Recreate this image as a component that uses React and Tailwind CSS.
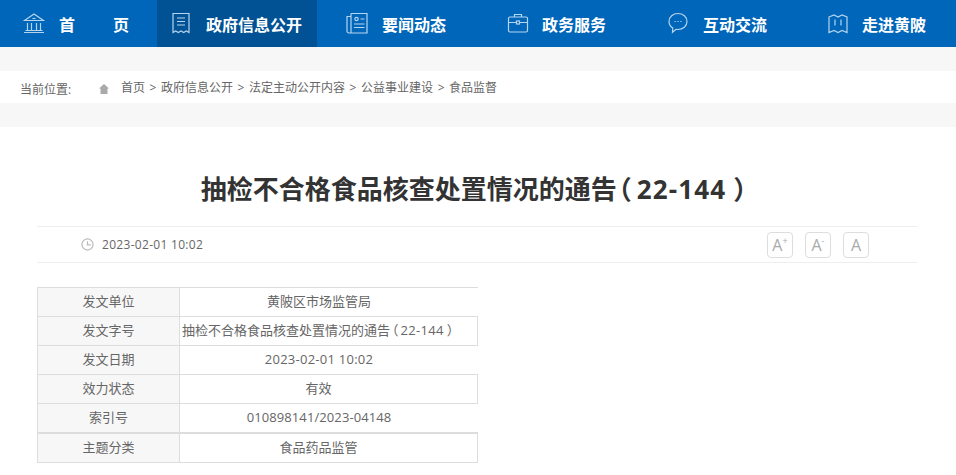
import React from 'react';

const navItems = [
  { label: '政府信息公开', icon: 'doc', active: true, width: 'w-[160px]', pad: 'pl-[13px]', gap: 'gap-[14px]' },
  { label: '要闻动态', icon: 'news', width: 'w-[160px]', pad: 'pl-[29px]', gap: 'gap-[14px]' },
  { label: '政务服务', icon: 'case', width: 'w-[160px]', pad: 'pl-[30px]', gap: 'gap-[13px]' },
  { label: '互动交流', icon: 'chat', width: 'w-[160px]', pad: 'pl-[30px]', gap: 'gap-[14px]' },
  { label: '走进黄陂', icon: 'map', width: 'w-[159px]', pad: 'pl-[30px]', gap: 'gap-[13px]' },
];

const crumbs = ['首页', '政府信息公开', '法定主动公开内容', '公益事业建设', '食品监督'];

const rows = [
  ['发文单位', '黄陂区市场监管局', ''],
  ['发文字号', null, ''],
  ['发文日期', '2023-02-01 10:02', 'tracking-[0.25px]'],
  ['效力状态', '有效', ''],
  ['索引号', '010898141/2023-04148', 'tracking-[0.1px]'],
  ['主题分类', '食品药品监管', ''],
];

const NavIcon = ({ name }) => {
  const common = {
    viewBox: '0 0 22 22',
    fill: 'none',
    stroke: 'currentColor',
    strokeWidth: 1.2,
    className: 'w-[22px] h-[22px] text-[#b5d4ee] shrink-0 -mt-[1px]',
  };
  if (name === 'home') {
    return (
      <svg {...common}>
        <path d="M1.500 8.500 11 2l9.500 6.500z" />
        <path d="M9.500 6.500h3" />
        <path d="M4.500 11v7M8.500 11v7M13.500 11v7M17.500 11v7" />
        <path d="M2.500 18.500h17M1 20.500h20" />
      </svg>
    );
  }
  if (name === 'doc') {
    return (
      <svg {...common}>
        <path d="M3 1.500h16v19l-2.700-1.500-2.600 1.500-2.700-1.500-2.700 1.500-2.600-1.500L3 20.500z" />
        <path d="M7 6h8M7 9.500h8M7 13h8" />
      </svg>
    );
  }
  if (name === 'news') {
    return (
      <svg {...common}>
        <path d="M5 1.500h16v19.500H3a2 2 0 0 1-2-2V4.500h4" />
        <path d="M5 1.500V21" />
        <circle cx="10.500" cy="7" r="1.700" />
        <path d="M14.500 7h4M8 12h10.500M8 15.500h10.500" />
      </svg>
    );
  }
  if (name === 'case') {
    return (
      <svg {...common}>
        <rect x="1.500" y="5" width="19" height="15" rx="1.500" />
        <path d="M7.500 5V2.500h7V5" />
        <path d="M1.500 10.500h7.500M13 10.500h7.500" />
        <rect x="9.500" y="9" width="3" height="3" />
      </svg>
    );
  }
  if (name === 'chat') {
    return (
      <svg {...common}>
        <path d="M11 1.500c5 0 9 3.500 9 8s-4 8-9 8c-.7 0-1.300 0-2-.2l-3.500 3 .3-4.300C3.300 14.500 2 12 2 9.500c0-4.500 4-8 9-8z" />
        <path d="M7.500 9.500h1.200M10.400 9.500h1.200M13.300 9.500h1.200" />
      </svg>
    );
  }
  return (
    <svg {...common}>
      <path d="M2 5 7 3l4 2 4-2 5 2v15.500L15 18.500l-4 2-4-2-5 2z" />
      <path d="M8 7.500v6M14 7.500v6" />
    </svg>
  );
};

const SizeButton = ({ sup }) => (
  <span className="w-[26px] h-[26px] border border-[#dddddd] rounded-[4px] flex items-center justify-center text-[16px] text-[#aaaaaa] leading-none">
    <span>A</span>
    {sup && <span className="self-start mt-[3px] text-[9px] leading-none">{sup}</span>}
  </span>
);

export default function App() {
  return (
    <div className="w-[956px] h-[475px] overflow-hidden bg-white font-['Open_Sans','Noto_Sans_CJK_SC',sans-serif]">
      <nav className="h-[47px] flex bg-[#0066ba] text-white font-bold text-[16px]">
        <div className="w-[157px] flex items-center pl-[23px]">
          <NavIcon name="home" />
          <span className="ml-[14px] mt-[3px]">首</span>
          <span className="ml-[38px] mt-[3px]">页</span>
        </div>
        {navItems.map((item) => (
          <div
            key={item.label}
            className={`${item.width} ${item.pad} ${item.gap} flex items-center ${item.active ? 'bg-[#005294]' : ''}`}
          >
            <NavIcon name={item.icon} />
            <span className="mt-[3px]">{item.label}</span>
          </div>
        ))}
      </nav>

      <div className="bg-[#f7f7f7] py-[24px]">
        <div className="h-[32px] bg-white flex items-center pl-[20px] text-[12px] text-[#666666]">
          <span className="w-[79px] pt-[5px]">当前位置:</span>
          <svg viewBox="0 0 10 10" className="w-[10px] h-[10px] text-[#aaaaaa] mt-[3px]" fill="currentColor">
            <path d="M5 0 10 4.500H8.500V10h-7V4.500H0z" />
          </svg>
          <div className="ml-[12px] flex items-center pt-[1px]">
            {crumbs.map((c, i) => (
              <React.Fragment key={c}>
                {i > 0 && <span className="w-[16px] text-center">&gt;</span>}
                <span>{c}</span>
              </React.Fragment>
            ))}
          </div>
        </div>
      </div>

      <h1 className="mt-[45px] pr-[9px] text-center text-[26px] leading-[34px] font-bold text-[#333333] whitespace-nowrap">
        抽检不合格食品核查处置情况的通告
        <span className="[font-feature-settings:'halt'] ml-[2px] mr-[5px]">（</span>
        <span className="tracking-[1.1px]">22-144</span>
        <span className="[font-feature-settings:'halt'] ml-[7px]">）</span>
      </h1>

      <div className="mx-[37px] w-[880px] mt-[20px] h-[37px] border-y border-[#eeeeee] flex items-center justify-between pl-[44px] pr-[48px] text-[12px] text-[#666666]">
        <div className="flex items-center gap-[8px]">
          <svg viewBox="0 0 14 14" className="w-[13px] h-[13px] text-[#bbbbbb]" fill="none" stroke="currentColor" strokeWidth="1.300">
            <circle cx="7" cy="7" r="6" />
            <path d="M7 3.500V7.500H10.500" />
          </svg>
          <span className="tracking-[0.3px]">2023-02-01 10:02</span>
        </div>
        <div className="flex gap-[12px]">
          <SizeButton sup="+" />
          <SizeButton sup="-" />
          <SizeButton />
        </div>
      </div>

      <div className="ml-[37px] mt-[24px] w-[441px] text-[13px] text-[#666666] border-t border-[#dddddd]">
        {rows.map(([name, value, track], i) => (
          <div
            key={name}
            className={`flex border-[#dddddd] ${i === 5 ? 'h-[31px] border-t-2 border-b' : i === 4 ? 'h-[28px]' : 'h-[29px] border-b'}`}
          >
            <div className="w-[143px] shrink-0 bg-[#f7f7f7] border-x border-[#dddddd] flex items-center justify-center">
              {name}
            </div>
            {value === null ? (
              <div className="flex-1 border-r border-[#dddddd] flex items-center pl-[2px] whitespace-nowrap">
                <span>抽检不合格食品核查处置情况的通告</span>
                <span className="[font-feature-settings:'halt'] ml-[2px] mr-[2px]">（</span>
                <span className="tracking-[0.3px]">22-144</span>
                <span className="[font-feature-settings:'halt'] ml-[3px]">）</span>
              </div>
            ) : (
              <div className={`flex-1 flex items-center justify-center pr-[20px] whitespace-nowrap border-[#dddddd] ${track} ${i % 2 === 1 ? 'border-r' : ''}`}>
                {value}
              </div>
            )}
          </div>
        ))}
      </div>
    </div>
  );
}
